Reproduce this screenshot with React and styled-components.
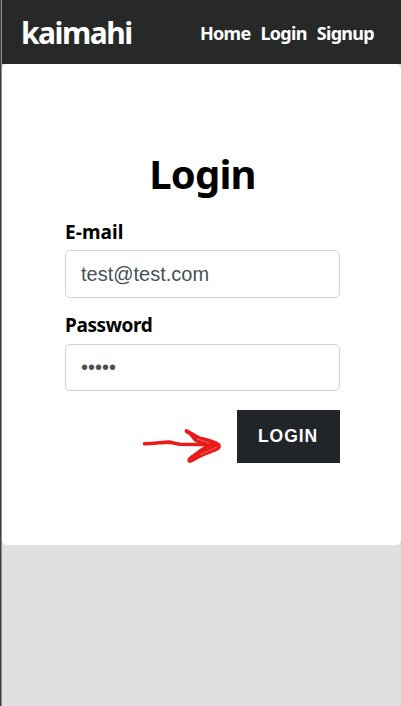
import React from 'react';
import styled, { createGlobalStyle } from 'styled-components';

const GlobalStyle = createGlobalStyle`
  * { box-sizing: border-box; }
  body {
    margin: 0;
    background: #e0e0e0;
    font-family: "Noto Sans", "Open Sans", sans-serif;
    color: #000;
  }
`;

const Page = styled.div`
  height: 706px;
  border-left: 1px solid #3f3f41;
  overflow: hidden;
`;

const Frame = styled.div`
  height: 100%;
  border-left: 1px solid #8b8b8b;
`;

const Header = styled.header`
  height: 64px;
  display: flex;
  align-items: center;
  justify-content: space-between;
  padding: 2px 27px 0 19px;
  background: #272928;
`;

const Brand = styled.a`
  color: #fff;
  font-size: 30px;
  font-weight: 700;
  line-height: 40px;
  letter-spacing: -1.5px;
`;

const Nav = styled.nav`
  display: flex;
  gap: 10px;
`;

const NavLink = styled.a`
  color: #fff;
  font-size: 18px;
  font-weight: 700;
  line-height: 24px;
  letter-spacing: -0.7px;
`;

const Card = styled.form`
  height: 481px;
  padding: 83px 61px 0 63px;
  background: #fff;
  border-radius: 5px;
  display: flex;
  flex-direction: column;
`;

const Title = styled.h1`
  margin: 0;
  text-align: center;
  font-size: 40px;
  font-weight: 700;
  line-height: 54px;
  height: 54px;
  letter-spacing: -0.8px;
`;

const Field = styled.div`
  display: flex;
  flex-direction: column;
  margin-top: ${(p) => p.$gap}px;
`;

const Label = styled.label`
  font-size: 19px;
  font-weight: 700;
  line-height: 26px;
  height: 26px;
  letter-spacing: ${(p) => p.$tracking}px;
`;

const Input = styled.input`
  width: 275px;
  height: ${(p) => p.$height}px;
  margin-top: ${(p) => p.$offset}px;
  padding: 0 15px;
  border: 1px solid #ced4da;
  border-radius: 5px;
  outline: none;
  background: #fff;
  color: #495057;
  font: 20px "Liberation Sans", Arial, sans-serif;
`;

const Actions = styled.div`
  display: flex;
  justify-content: flex-end;
  gap: 15px;
  margin-top: 19px;
`;

const Arrow = styled.svg`
  width: 80px;
  height: 53px;
  overflow: visible;
`;

const Submit = styled.button`
  width: 103px;
  height: 53px;
  padding: 0 1px 0 0;
  border: 0;
  background: #212529;
  color: #fff;
  font: 700 17.5px "Liberation Sans", Arial, sans-serif;
  letter-spacing: 0.9px;
`;

export default function App() {
  return (
    <>
      <GlobalStyle />
      <Page>
        <Frame>
          <Header>
            <Brand>kaimahi</Brand>
            <Nav>
              <NavLink>Home</NavLink>
              <NavLink>Login</NavLink>
              <NavLink>Signup</NavLink>
            </Nav>
          </Header>
          <Card>
            <Title>Login</Title>
            <Field $gap={18}>
              <Label htmlFor="email" $tracking={0.1}>E-mail</Label>
              <Input id="email" $height={48} $offset={5} defaultValue="test@test.com" />
            </Field>
            <Field $gap={14}>
              <Label htmlFor="password" $tracking={-0.4}>Password</Label>
              <Input id="password" type="password" $height={47} $offset={6} defaultValue="12345" />
            </Field>
            <Actions>
              <Arrow viewBox="142 410 80 53" fill="none" stroke="#e91c1c" strokeLinecap="round" strokeLinejoin="round">
                <path strokeWidth="3.6" d="M144.5 443.7C153 443.7 162 442.3 169 442.1C173 442.5 175 444 180 444.2L212 444.6" />
                <path fill="#e91c1c" strokeWidth="1.6" d="M186.3 429.8C191 431.5 195 435 200 437.2C207 439 214 440.5 219 443.6C221.3 446 220.5 448.6 215 451C210 453 206 454 201.7 456.2C197 458.5 194 461 190 462.2C188 462 187.5 460.5 189 458.3C191 456 193 454.8 195 453.5C198 451 201 449 205 446.7L204 444.5C200 443 197 442 195 440.8C192 438.5 192 436 189 434C186.5 433 184 431 186.3 429.8Z" />
                <path stroke="#fff" strokeOpacity="0.65" strokeWidth="0.6" strokeDasharray="3 1.5" d="M197.5 439.2L210 443.2M200.5 454.5L217 447" />
              </Arrow>
              <Submit type="button">LOGIN</Submit>
            </Actions>
          </Card>
        </Frame>
      </Page>
    </>
  );
}
